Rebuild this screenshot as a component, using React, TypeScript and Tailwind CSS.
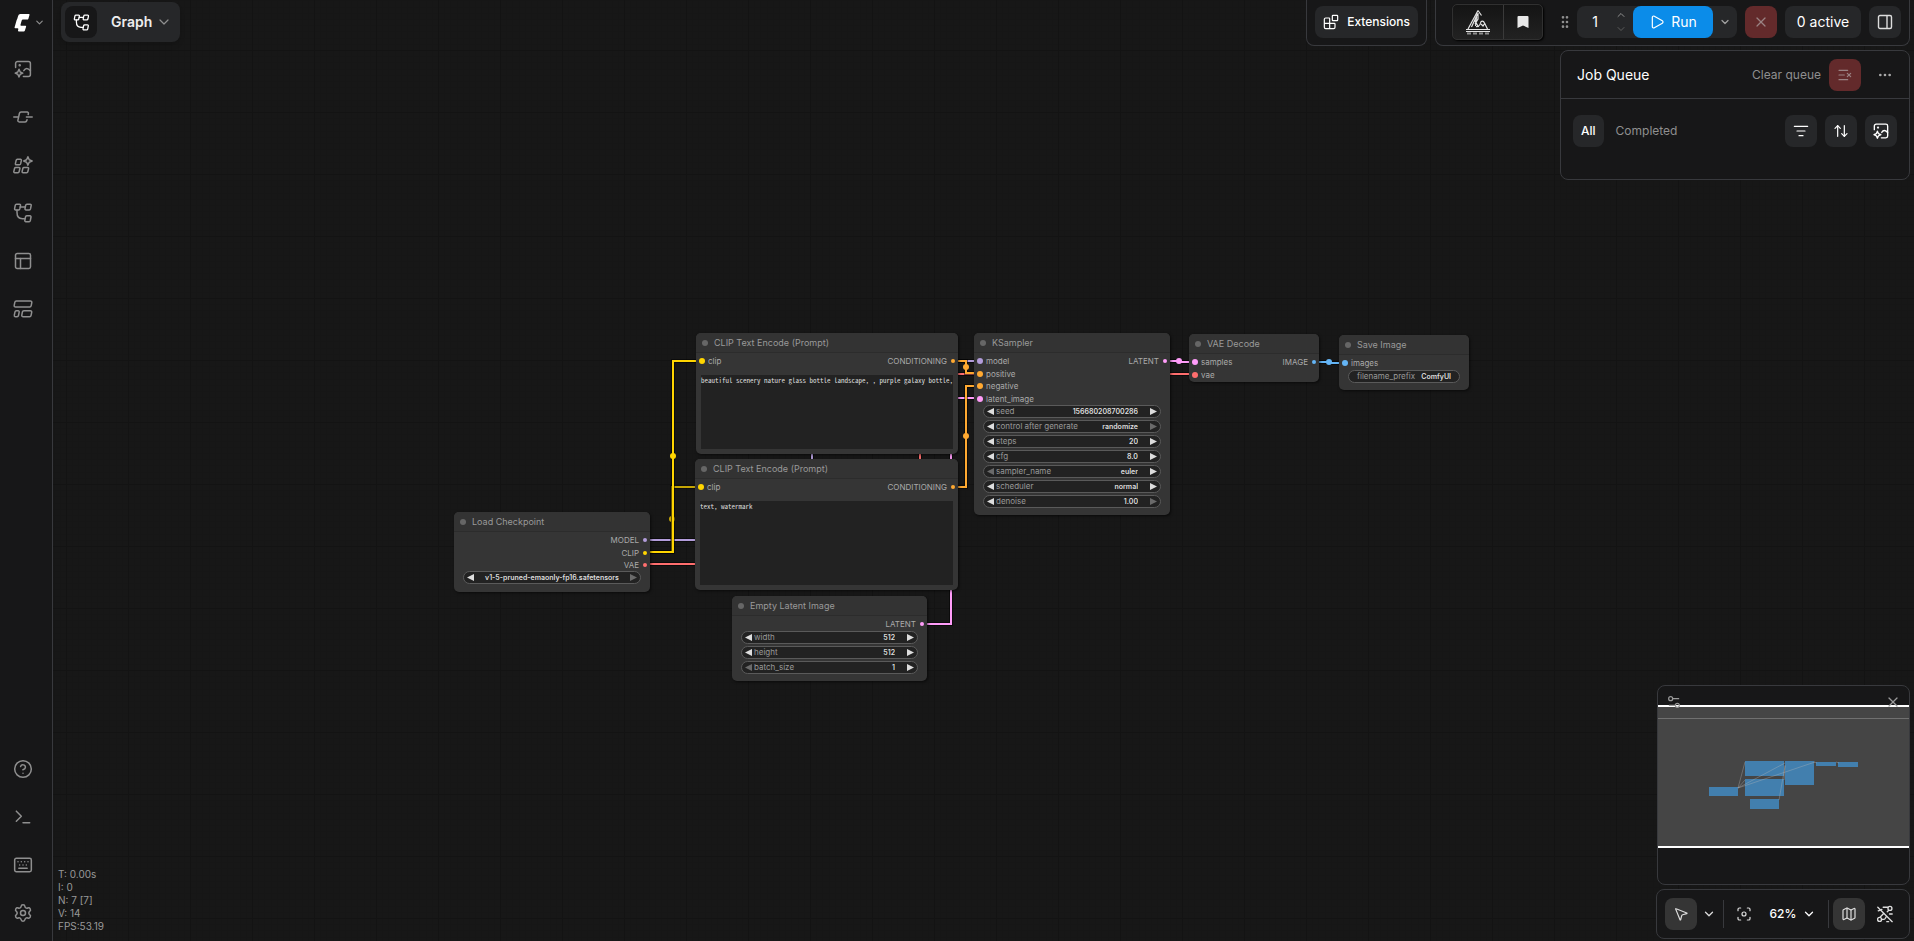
import { useId } from "react";
import type { CSSProperties, ReactNode } from "react";
import clsx from "clsx";
import {
  ArrowUpDown,
  Blocks,
  ChevronDown,
  ChevronUp,
  CircleHelp,
  Ellipsis,
  Focus,
  GripVertical,
  Keyboard,
  ListFilter,
  ListX,
  Map as MapIcon,
  MousePointer2,
  PanelsTopLeft,
  Play,
  Settings,
  Settings2,
  Terminal,
  X,
} from "lucide-react";

type Slot = { name: string; color: string };

type WidgetDef = {
  label?: string;
  value: string;
  kind?: "number" | "combo" | "text";
  noPrev?: boolean;
  noNext?: boolean;
};

type NodeDef = {
  id: string;
  title: string;
  x: number;
  y: number;
  w: number;
  h: number;
  inputs?: Slot[];
  outputs?: Slot[];
  slotArea: string;
  widgets?: WidgetDef[];
  prompt?: string;
};

const MODEL = "#b39ddb";
const CLIP = "#ffd500";
const VAE = "#ff6e6e";
const COND = "#ffa931";
const LATENT = "#ff9cf9";
const IMAGE = "#64b5f6";

const nodes: NodeDef[] = [
  {
    id: "checkpoint",
    title: "Load Checkpoint",
    x: 454,
    y: 512,
    w: 196,
    h: 80,
    outputs: [
      { name: "MODEL", color: MODEL },
      { name: "CLIP", color: CLIP },
      { name: "VAE", color: VAE },
    ],
    slotArea: "h-[37px]",
    widgets: [{ value: "v1-5-pruned-emaonly-fp16.safetensors", kind: "combo", noNext: true }],
  },
  {
    id: "positive",
    title: "CLIP Text Encode (Prompt)",
    x: 696,
    y: 333,
    w: 262,
    h: 121,
    inputs: [{ name: "clip", color: CLIP }],
    outputs: [{ name: "CONDITIONING", color: COND }],
    slotArea: "h-[13px]",
    prompt: "beautiful scenery nature glass bottle landscape, , purple galaxy bottle,",
  },
  {
    id: "negative",
    title: "CLIP Text Encode (Prompt)",
    x: 695,
    y: 459,
    w: 263,
    h: 131,
    inputs: [{ name: "clip", color: CLIP }],
    outputs: [{ name: "CONDITIONING", color: COND }],
    slotArea: "h-[13px]",
    prompt: "text, watermark",
  },
  {
    id: "latent",
    title: "Empty Latent Image",
    x: 732,
    y: 596,
    w: 195,
    h: 85,
    outputs: [{ name: "LATENT", color: LATENT }],
    slotArea: "h-[13px]",
    widgets: [
      { label: "width", value: "512" },
      { label: "height", value: "512" },
      { label: "batch_size", value: "1", noPrev: true },
    ],
  },
  {
    id: "ksampler",
    title: "KSampler",
    x: 974,
    y: 333,
    w: 196,
    h: 182,
    inputs: [
      { name: "model", color: MODEL },
      { name: "positive", color: COND },
      { name: "negative", color: COND },
      { name: "latent_image", color: LATENT },
    ],
    outputs: [{ name: "LATENT", color: LATENT }],
    slotArea: "h-[50px]",
    widgets: [
      { label: "seed", value: "156680208700286" },
      { label: "control after generate", value: "randomize", kind: "combo", noNext: true },
      { label: "steps", value: "20" },
      { label: "cfg", value: "8.0" },
      { label: "sampler_name", value: "euler", kind: "combo", noPrev: true },
      { label: "scheduler", value: "normal", kind: "combo" },
      { label: "denoise", value: "1.00", noNext: true },
    ],
  },
  {
    id: "decode",
    title: "VAE Decode",
    x: 1189,
    y: 334,
    w: 130,
    h: 48,
    inputs: [
      { name: "samples", color: LATENT },
      { name: "vae", color: VAE },
    ],
    outputs: [{ name: "IMAGE", color: IMAGE }],
    slotArea: "h-[25px]",
  },
  {
    id: "save",
    title: "Save Image",
    x: 1339,
    y: 335,
    w: 130,
    h: 55,
    inputs: [{ name: "images", color: IMAGE }],
    slotArea: "h-[13px]",
    widgets: [{ label: "filename_prefix", value: "ComfyUI", kind: "text" }],
  },
];

const links = [
  { d: "M650 540H812V361H974", color: MODEL },
  { d: "M650 564H920V374H1189", color: VAE },
  { d: "M650 552H672V487H695", color: CLIP, dot: [672, 519], dim: true },
  { d: "M650 552H673V361H696", color: CLIP, dot: [673, 456] },
  { d: "M927 624H951V398H974", color: LATENT },
  { d: "M958 361H966V373H974", color: COND, dot: [966, 367] },
  { d: "M958 487H966V386H974", color: COND, dot: [966, 436] },
  { d: "M1170 361H1180V362H1189", color: LATENT, dot: [1179, 361] },
  { d: "M1319 362H1329V363H1339", color: IMAGE, dot: [1329, 362] },
];

// same nodes, scaled down to the minimap
const miniNodes = [
  [51, 101, 29, 9],
  [87, 75, 39, 15],
  [87, 93, 39, 17],
  [92, 113, 29, 10],
  [127, 75, 29, 24],
  [158, 76, 20, 4],
  [180, 76, 20, 5],
];

/* ---------- icons ---------- */

function Svg({ className, children }: { className?: string; children: ReactNode }) {
  return (
    <svg
      viewBox="0 0 20 20"
      className={className ?? "size-5"}
      fill="none"
      stroke="currentColor"
      strokeWidth="1.5"
      strokeLinecap="round"
      strokeLinejoin="round"
      aria-hidden="true"
    >
      {children}
    </svg>
  );
}

function AssetsIcon({ className }: { className?: string }) {
  return (
    <Svg className={className}>
      <path d="M2.6 8.5V4.4a2 2 0 0 1 2-2h10.8a2 2 0 0 1 2 2v11.2a2 2 0 0 1-2 2h-5" />
      <path d="M10.8 11.6c1.6-2.8 4-3 6.6.2" />
      <circle cx="6.7" cy="6.2" r=".5" fill="currentColor" />
      <path d="M6 10.2 7.2 13l2.6 1.1-2.6 1.2L6 18l-1.2-2.7-2.6-1.2L4.8 13z" />
    </Svg>
  );
}

function NodeIcon() {
  return (
    <Svg>
      <path d="M.8 10h4M13.4 10h5.8" />
      <path d="M15.2 7.6l.2-1.1a1.2 1.2 0 0 0-1.2-1.4H8.1a1.8 1.8 0 0 0-1.7 1.4l-1.5 6.6a1.4 1.4 0 0 0 1.4 1.8H12a1.8 1.8 0 0 0 1.8-1.4l.2-.7" />
    </Svg>
  );
}

function ModelsIcon() {
  return (
    <Svg>
      <path d="M4.3 4.3h3.2a.9.9 0 0 1 .9 1.1l-.8 3.5a1.2 1.2 0 0 1-1.2.9H3.3a.9.9 0 0 1-.9-1.1l.8-3.5a1.2 1.2 0 0 1 1.1-.9z" />
      <path d="M2.8 12.4H6a.9.9 0 0 1 .9 1.1l-.8 3.3a1.2 1.2 0 0 1-1.2.9H1.7a.9.9 0 0 1-.9-1.1l.8-3.3a1.2 1.2 0 0 1 1.2-.9z" />
      <path d="M11.1 12.4h3.6a.9.9 0 0 1 .9 1.1l-.8 3.3a1.2 1.2 0 0 1-1.2.9H10a.9.9 0 0 1-.9-1.1l.8-3.3a1.2 1.2 0 0 1 1.2-.9z" />
      <path d="m14.9 1.8 1.3 2.9 2.9 1.3-2.9 1.3-1.3 2.9-1.3-2.9L10.7 6l2.9-1.3z" />
    </Svg>
  );
}

function WorkflowIcon({ className }: { className?: string }) {
  return (
    <Svg className={className}>
      <path d="M3.5 1.2h3a1 1 0 0 1 1 1.2l-.7 3.5a1.3 1.3 0 0 1-1.2 1H2.6a1 1 0 0 1-1-1.2l.7-3.5a1.3 1.3 0 0 1 1.2-1z" />
      <path d="M13.9 1.2h3.3a1 1 0 0 1 1 1.2l-.7 3.5a1.3 1.3 0 0 1-1.2 1H13a1 1 0 0 1-1-1.2l.7-3.5a1.3 1.3 0 0 1 1.2-1z" />
      <path d="M13.7 12.8H17a1 1 0 0 1 1 1.2l-.7 3.7a1.3 1.3 0 0 1-1.2 1h-3.3a1 1 0 0 1-1-1.2l.7-3.7a1.3 1.3 0 0 1 1.2-1z" />
      <path d="M7.3 4h4.8M4 7v2.5c0 4 2.2 6.2 5.4 6.2h2.3" />
    </Svg>
  );
}

function TemplatesIcon() {
  return (
    <Svg>
      <path d="M3.4 2h14a1.4 1.4 0 0 1 1.4 1.7l-.6 3a1.6 1.6 0 0 1-1.6 1.3h-14a1.4 1.4 0 0 1-1.4-1.7l.6-3A1.6 1.6 0 0 1 3.4 2z" />
      <path d="M3.4 11.7H5a1.2 1.2 0 0 1 1.2 1.5l-.7 3.3A1.5 1.5 0 0 1 4 17.7H2.5A1.2 1.2 0 0 1 1.3 16.2l.7-3.3a1.5 1.5 0 0 1 1.4-1.2z" />
      <path d="M11 11.7h6.4a1.3 1.3 0 0 1 1.3 1.6l-.6 3.1a1.6 1.6 0 0 1-1.6 1.3h-6.4a1.3 1.3 0 0 1-1.3-1.6l.6-3.1a1.6 1.6 0 0 1 1.6-1.3z" />
    </Svg>
  );
}

function LinksOffIcon() {
  return (
    <Svg className="size-[18px]">
      <path d="M2 2.5 18 18.5" />
      <circle cx="15.5" cy="3.8" r="2.2" />
      <circle cx="4" cy="16" r="2.2" />
      <path d="M8 2.5h5M2.5 6.5l4-1.5M6 16h2.5a2 2 0 0 0 1.7-1L11.5 13M8.5 9.5 5 13M12.5 7.5 14 6M15 10h3M12 18.5h2" />
    </Svg>
  );
}

function Logo() {
  return (
    <svg viewBox="0 0 16 18" className="h-[18px] w-4" fill="#fff" aria-hidden="true">
      <path d="M4.1 1.9Q4.6 0 6.4 0H14.9Q15.8 0 15.5 1L14.4 4.7Q14.1 5.6 13.2 5.6H8.900Q8 5.6 7.700 6.500L6.500 10.700Q6.200 11.800 7.200 11.800H11.400Q12.400 11.800 12.100 12.800L10.900 16.600Q10.600 17.500 9.700 17.500H4.900Q3.900 17.500 4 16.500L4.300 15.300Q4.500 14.300 3.500 14.300H1.300Q.3 14.300.6 13.200L2.600 6.200Q2.900 5.200 3.300 4.700Z" />
    </svg>
  );
}

function PyramidLogo() {
  return (
    <svg viewBox="0 0 26 26" className="size-[26px]" fill="none" stroke="#e4e4e4" aria-hidden="true">
      <path d="M13 1.5 3 20M13 1.5l3.5 5M12.5 5 6.5 18M11.5 8l-1 9M9.5 11l4 7M13 4v6l-3 5" strokeWidth="1.2" />
      <path d="M11 17.5c2 .5 4-1 4.5-3.5s3-2.5 4 0l3 6M16 15l2 2 2-3" strokeWidth="1.2" />
      <path d="M1 20.5h24M1 22.5h24" strokeWidth="1" />
      <path d="M2 24.5h22" strokeWidth="2" strokeDasharray="4 2" stroke="#8e8e8e" />
    </svg>
  );
}

/* ---------- graph canvas ---------- */

function Arrow({ dir, off, name }: { dir: "prev" | "next"; off?: boolean; name: string }) {
  return (
    <button
      type="button"
      disabled={off}
      aria-label={`${dir === "prev" ? "Previous" : "Next"} ${name}`}
      className={clsx("shrink-0", off ? "text-[#6a6a6a]" : "text-[#dddddd]")}
    >
      <svg viewBox="0 0 6 6" className="size-[7px]" fill="currentColor" aria-hidden="true">
        {dir === "prev" ? <path d="M6 0v6L0 3z" /> : <path d="M0 0v6l6-3z" />}
      </svg>
    </button>
  );
}

function Widget({ label, value, kind = "number", noPrev, noNext }: WidgetDef) {
  const id = useId();
  const name = label ?? "ckpt_name";
  const field =
    "h-[11px] min-w-0 flex-1 appearance-none bg-transparent p-0 text-[7px] leading-[11px] font-semibold text-[#dddddd] outline-none";

  return (
    <div className="flex h-[13px] items-center rounded-full border border-[#5a5a5a] bg-[#222222] px-[3px]">
      {kind !== "text" && <Arrow dir="prev" off={noPrev} name={name} />}
      {label && (
        <label
          htmlFor={id}
          className={clsx("text-[8px] leading-[11px] whitespace-nowrap text-[#999999]", kind === "text" ? "pl-[5px]" : "pl-[2px]")}
        >
          {label}
        </label>
      )}
      {kind === "combo" ? (
        <select
          id={id}
          aria-label={label ? undefined : name}
          defaultValue={value}
          className={clsx(field, label ? "pr-3 [text-align-last:right]" : "[text-align-last:center]")}
        >
          <option>{value}</option>
        </select>
      ) : (
        <input id={id} defaultValue={value} className={clsx(field, "text-right", kind === "text" ? "pr-[5px]" : "pr-3")} />
      )}
      {kind !== "text" && <Arrow dir="next" off={noNext} name={name} />}
    </div>
  );
}

function SlotDot({ color, out }: { color: string; out?: boolean }) {
  return <span className={clsx("rounded-full", out ? "size-1" : "size-[6px]")} style={{ backgroundColor: color }} />;
}

function GraphNode({ node }: { node: NodeDef }) {
  const place: CSSProperties = { left: node.x, top: node.y, width: node.w, height: node.h };

  return (
    <article
      className="absolute flex flex-col rounded-[5px] bg-[#353535] text-[8px] leading-3 text-[#aaaaaa] shadow-[1px_1px_3px_rgba(0,0,0,0.6)]"
      style={place}
    >
      <h2 className="flex h-5 shrink-0 items-center gap-[6px] rounded-t-[5px] border-b border-[#2c2c2c] bg-[#333333] pt-px pl-[6px] text-[9px] text-[#999999]">
        <span className="size-[6px] rounded-full bg-[#666666]" />
        {node.title}
      </h2>
      <div className={clsx("mt-[2px] flex shrink-0 justify-between px-[3px]", node.slotArea)}>
        <ul className="flex flex-col justify-between">
          {node.inputs?.map((slot) => (
            <li key={slot.name} className="flex h-3 items-center gap-[3px]">
              <SlotDot color={slot.color} />
              {slot.name}
            </li>
          ))}
        </ul>
        <ul className={clsx("flex flex-col", node.outputs && node.outputs.length > 1 && "justify-between")}>
          {node.outputs?.map((slot) => (
            <li key={slot.name} className="flex h-3 items-center justify-end gap-1">
              {slot.name}
              <SlotDot color={slot.color} out />
            </li>
          ))}
        </ul>
      </div>
      {node.widgets && (
        <div className="flex flex-col gap-[2px] px-[9px]">
          {node.widgets.map((widget) => (
            <Widget key={widget.value + widget.label} {...widget} />
          ))}
        </div>
      )}
      {node.prompt && (
        <textarea
          aria-label={node.title}
          defaultValue={node.prompt}
          spellCheck={false}
          className="mx-[5px] mt-[7px] mb-[5px] min-h-0 flex-1 resize-none overflow-hidden bg-[#222222] pt-px font-['Noto_Sans_Mono_CJK_SC','Liberation_Mono',monospace] text-[7px] leading-[8px] whitespace-nowrap text-[#dddddd] outline-none"
        />
      )}
    </article>
  );
}

function GraphCanvas() {
  return (
    <section
      aria-label="Workflow graph"
      className="absolute inset-0 overflow-hidden bg-[#171717] bg-[linear-gradient(to_right,#131313_1px,transparent_1px),linear-gradient(to_bottom,#131313_1px,transparent_1px),repeating-linear-gradient(to_right,#161616_0,#161616_1px,transparent_1px,transparent_10%),repeating-linear-gradient(to_bottom,#161616_0,#161616_1px,transparent_1px,transparent_10%)] bg-size-[62px_62px] bg-position-[4px_50px]"
    >
      <svg className="absolute inset-0 size-full" fill="none" aria-hidden="true">
        {links.map((link) => (
          <g key={link.d} opacity={link.dim ? 0.75 : 1}>
            <path d={link.d} stroke="#000" strokeOpacity="0.5" strokeWidth="4" />
            <path d={link.d} stroke={link.color} strokeWidth="2" />
            {link.dot && <circle cx={link.dot[0]} cy={link.dot[1]} r="3" fill={link.color} />}
          </g>
        ))}
      </svg>
      {nodes.map((node) => (
        <GraphNode key={node.id} node={node} />
      ))}
    </section>
  );
}

/* ---------- chrome ---------- */

function SideButton({ label, children }: { label: string; children: ReactNode }) {
  return (
    <button type="button" aria-label={label} className="flex h-12 w-[45px] items-center justify-center">
      {children}
    </button>
  );
}

function SideBar() {
  return (
    <aside className="flex w-[53px] shrink-0 flex-col border-r border-[#38393d] bg-[#171718] pb-1 text-[#8f8f8f]">
      <button type="button" aria-label="Menu" className="flex h-[45px] items-center gap-1 pl-[14px]">
        <Logo />
        <ChevronDown className="size-[11px]" strokeWidth={2.5} />
      </button>
      <SideButton label="Assets">
        <AssetsIcon />
      </SideButton>
      <SideButton label="Nodes">
        <NodeIcon />
      </SideButton>
      <SideButton label="Models">
        <ModelsIcon />
      </SideButton>
      <SideButton label="Workflows">
        <WorkflowIcon />
      </SideButton>
      <SideButton label="Apps">
        <PanelsTopLeft className="size-5" strokeWidth={1.8} />
      </SideButton>
      <SideButton label="Templates">
        <TemplatesIcon />
      </SideButton>
      <div className="mt-auto">
        <SideButton label="Help">
          <CircleHelp className="size-5" strokeWidth={1.8} />
        </SideButton>
        <SideButton label="Console">
          <Terminal className="size-5" strokeWidth={1.8} />
        </SideButton>
        <SideButton label="Shortcuts">
          <Keyboard className="size-5" strokeWidth={1.8} />
        </SideButton>
        <SideButton label="Settings">
          <Settings className="size-5" strokeWidth={1.8} />
        </SideButton>
      </div>
    </aside>
  );
}

const iconButton = "flex size-8 items-center justify-center rounded-lg";

function ActionBar() {
  return (
    <div className="flex gap-2 pr-1">
      <div className="flex h-[46px] rounded-b-lg border border-t-0 border-[#38393d] bg-[#171718] px-2 pt-[6px]">
        <button type="button" className="flex h-8 items-center gap-2 rounded-lg bg-[#262729] px-2 text-xs font-medium text-white">
          <Blocks className="size-4" strokeWidth={1.8} />
          Extensions
        </button>
      </div>
      <div className="flex h-[46px] items-start rounded-b-lg border border-t-0 border-[#38393d] bg-[#171718] pt-[6px] pr-2 pl-4">
        <div className="-mt-[2px] flex h-9 overflow-hidden rounded-[5px] border border-[#303030] bg-linear-to-b from-[#141414] to-[#222222] shadow-[1px_1px_2px_#000]">
          <button type="button" aria-label="Monitor" className="flex w-[51px] items-center justify-center border-r border-[#3a3a3a]">
            <PyramidLogo />
          </button>
          <button type="button" aria-label="Bookmarks" className="flex w-[38px] items-center justify-center">
            <svg viewBox="0 0 12 12" className="size-3" fill="#e8e8e8" aria-hidden="true">
              <path d="M.5 1a1 1 0 0 1 1-1h9a1 1 0 0 1 1 1v11L6 9.5.5 12z" />
            </svg>
          </button>
        </div>
        <GripVertical className="ml-[14px] h-8 w-4 text-[#8f8f8f]" strokeWidth={2} />
        <div className="ml-1 flex h-8 rounded-lg bg-[#262729]">
          <input aria-label="Batch count" defaultValue="1" className="w-9 bg-transparent text-center text-sm text-white outline-none" />
          <div className="flex w-5 flex-col items-center justify-between py-[3px] pr-1 text-[#8f8f8f]">
            <button type="button" aria-label="Increase">
              <ChevronUp className="size-3" />
            </button>
            <button type="button" aria-label="Decrease" disabled className="text-[#5c5c5c]">
              <ChevronDown className="size-3" />
            </button>
          </div>
          <button type="button" className="flex w-20 items-center justify-center gap-[6px] rounded-lg bg-[#0b8ce9] text-sm text-white">
            <Play className="size-4" strokeWidth={1.8} />
            Run
          </button>
          <button type="button" aria-label="Run options" className="flex w-6 items-center justify-center text-[#a0a0a0]">
            <ChevronDown className="size-3" strokeWidth={2.5} />
          </button>
        </div>
        <button type="button" aria-label="Cancel run" className={clsx(iconButton, "ml-2 bg-[#632a2b] text-[#9a8283]")}>
          <X className="size-4" strokeWidth={1.8} />
        </button>
        <button type="button" className="ml-2 flex h-8 w-[76px] items-center justify-center rounded-lg bg-[#262729] text-sm text-white">
          0 active
        </button>
        <button type="button" aria-label="Toggle panel" className={clsx(iconButton, "ml-2 bg-[#262729] text-[#dddddd]")}>
          <svg viewBox="0 0 16 16" className="size-4" fill="none" stroke="currentColor" strokeWidth="1.4" aria-hidden="true">
            <rect x="1.5" y="1.5" width="13" height="13" rx="1.5" />
            <path d="M10 1.5v13" />
          </svg>
        </button>
      </div>
    </div>
  );
}

function JobQueue() {
  return (
    <section className="mt-1 mr-1 h-[130px] w-[350px] self-end rounded-lg border border-[#38393d] bg-[#171718]">
      <header className="flex h-12 items-center border-b border-[#38393d] pr-2 pl-4">
        <h2 className="text-sm text-white">Job Queue</h2>
        <span className="ml-auto text-xs text-[#8f8f8f]">Clear queue</span>
        <button type="button" aria-label="Clear queue" className={clsx(iconButton, "ml-2 bg-[#632a2b] text-[#9a8283]")}>
          <ListX className="size-4" strokeWidth={1.8} />
        </button>
        <button type="button" aria-label="More" className={clsx(iconButton, "ml-2 text-[#aaaaaa]")}>
          <Ellipsis className="size-4" />
        </button>
      </header>
      <div className="flex items-center gap-2 px-3 pt-4">
        <button type="button" className="h-8 rounded-lg bg-[#262729] px-2 text-xs font-medium text-white">
          All
        </button>
        <button type="button" className="mr-auto px-1 text-xs text-[#8f8f8f]">
          Completed
        </button>
        <button type="button" aria-label="Filter" className={clsx(iconButton, "bg-[#262729] text-white")}>
          <ListFilter className="size-4" strokeWidth={1.8} />
        </button>
        <button type="button" aria-label="Sort" className={clsx(iconButton, "bg-[#262729] text-white")}>
          <ArrowUpDown className="size-4" strokeWidth={1.8} />
        </button>
        <button type="button" aria-label="Show assets" className={clsx(iconButton, "bg-[#262729] text-white")}>
          <AssetsIcon className="size-[18px]" />
        </button>
      </div>
    </section>
  );
}

function Minimap() {
  return (
    <section aria-label="Minimap" className="relative h-[200px] w-[253px] overflow-hidden rounded-lg border border-[#38393d] bg-[#171718]">
      <svg viewBox="0 0 251 198" className="size-full" aria-hidden="true">
        <rect y="19" width="251" height="142" fill="#454545" />
        <path d="M0 32.5H251" stroke="#707070" />
        <path d="M0 20H251M0 161H251" stroke="#fff" strokeWidth="2" />
        {miniNodes.map(([x, y, w, h]) => (
          <rect key={`${x}-${y}`} x={x} y={y} width={w} height={h} fill="#427fae" />
        ))}
        <path
          d="M80 102 87 76M80 102 87 94M80 102 127 77M80 102 157 76M121 114 127 80M126 94 127 79M156 76l3 1M178 76l3 1"
          stroke="#bbbbbb"
          strokeOpacity="0.35"
          fill="none"
        />
      </svg>
      <div className="absolute inset-x-0 top-0 flex justify-between px-2 pt-2 text-[#9a9a9a]">
        <button type="button" aria-label="Minimap settings">
          <Settings2 className="size-4" strokeWidth={1.8} />
        </button>
        <button type="button" aria-label="Close minimap">
          <X className="size-4" strokeWidth={1.8} />
        </button>
      </div>
    </section>
  );
}

function CanvasToolbar() {
  return (
    <div className="flex h-[50px] w-[254px] items-center rounded-lg border border-[#38393d] bg-[#171718] px-2 text-[#dddddd]">
      <button type="button" aria-label="Select" className={clsx(iconButton, "bg-[#353535]")}>
        <MousePointer2 className="size-4" strokeWidth={1.8} />
      </button>
      <button type="button" aria-label="Select options" className="flex h-8 w-6 items-center justify-center">
        <ChevronDown className="size-[14px]" strokeWidth={2.2} />
      </button>
      <span className="mr-1 ml-[2px] h-7 w-px bg-[#38393d]" />
      <button type="button" aria-label="Fit view" className={iconButton}>
        <Focus className="size-4" strokeWidth={1.8} />
      </button>
      <button type="button" className="flex h-8 flex-1 items-center justify-center gap-[6px] pl-[2px] text-xs font-medium text-white">
        62%
        <ChevronDown className="size-[14px]" strokeWidth={2.2} />
      </button>
      <span className="mx-1 h-7 w-px bg-[#38393d]" />
      <button type="button" aria-label="Toggle minimap" className={clsx(iconButton, "bg-[#353535]")}>
        <MapIcon className="size-4" strokeWidth={1.8} />
      </button>
      <button type="button" aria-label="Hide links" className={clsx(iconButton, "ml-1")}>
        <LinksOffIcon />
      </button>
    </div>
  );
}

export default function App() {
  return (
    <div className="relative flex h-screen overflow-hidden bg-[#171717] font-['Inter',sans-serif]">
      <GraphCanvas />
      <div className="relative flex flex-1">
        <SideBar />
        <main className="flex flex-1 flex-col">
          <div className="flex items-start justify-between">
            <button
              type="button"
              className="mt-[2px] ml-2 flex h-10 items-center rounded-lg bg-[#262729] pr-2 pl-1 text-sm font-semibold text-[#eeeeee] shadow-md"
            >
              <span className={clsx(iconButton, "mr-[14px] bg-[#171718] text-white")}>
                <WorkflowIcon className="size-[17px]" />
              </span>
              Graph
              <ChevronDown className="ml-1 size-4 text-[#8f8f8f]" strokeWidth={1.8} />
            </button>
            <ActionBar />
          </div>
          <JobQueue />
          <div className="mt-auto flex items-end justify-between pr-1 pb-[2px]">
            <ul className="mb-[6px] ml-[5px] text-[10px] leading-[13px] text-[#999999]">
              <li>T: 0.00s</li>
              <li>I: 0</li>
              <li>N: 7 [7]</li>
              <li>V: 14</li>
              <li>FPS:53.19</li>
            </ul>
            <div className="flex flex-col items-end gap-1">
              <Minimap />
              <CanvasToolbar />
            </div>
          </div>
        </main>
      </div>
    </div>
  );
}
